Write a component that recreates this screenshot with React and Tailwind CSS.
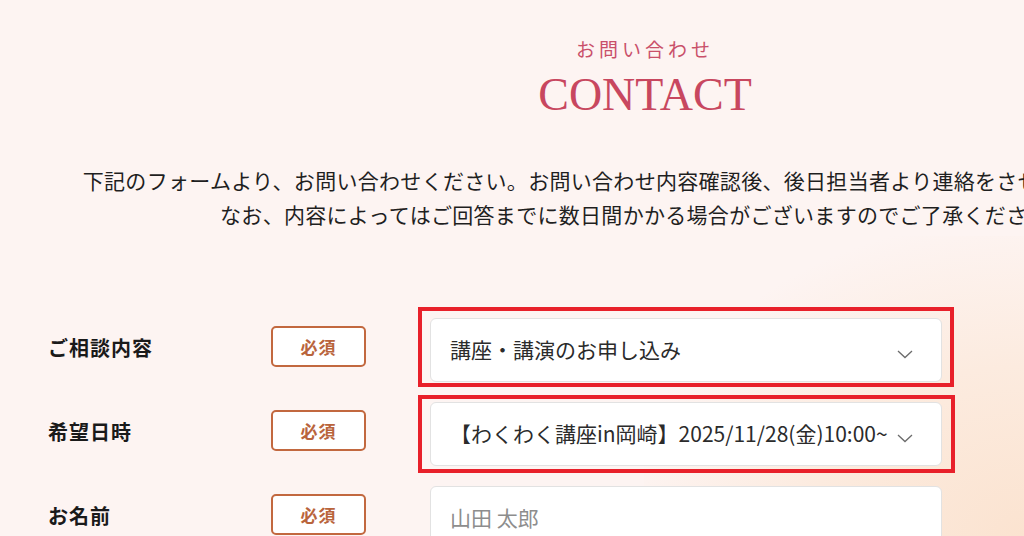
import React from "react";

function Chevron() {
  return (
    <svg width="16" height="9" viewBox="0 0 16 9" className="shrink-0">
      <polyline points="1,1 8,7.5 15,1" fill="none" stroke="#6b6b6b" strokeWidth="1.3" />
    </svg>
  );
}

function Badge() {
  return (
    <div className="mt-[8px] w-[95px] h-[41px] shrink-0 flex items-center justify-center rounded-[5px] border-2 border-[#c2683f] bg-white text-[17px] font-bold text-[#b9643c] leading-none tracking-[1px]">
      必須
    </div>
  );
}

function Row({ label, children }) {
  return (
    <div className="flex items-start h-[64px]">
      <div className="w-[223px] shrink-0 mt-[15px] leading-[30px] text-[20px] font-bold tracking-[1px] text-[#1a1a1a]">
        {label}
      </div>
      <Badge />
      <div className="ml-[64px] w-[512px] h-[64px] shrink-0 rounded-[6px] border border-[#e2e2e2] bg-white flex items-center pl-[19px] pr-[28px]">
        {children}
      </div>
    </div>
  );
}

export default function App() {
  return (
    <div
      className="relative w-[1024px] h-[536px] overflow-hidden bg-[#fdf4f2]"
      style={{ fontFamily: '"Noto Sans CJK JP", "Noto Sans", sans-serif' }}
    >
      <div className="absolute right-0 bottom-0 w-[380px] h-[300px] bg-[radial-gradient(ellipse_at_100%_100%,#fbe3d0_0%,#fcebdf_40%,rgba(253,244,242,0)_75%)]" />
      <div className="relative w-[1290px] flex flex-col items-center">
        <div className="mt-[36px] leading-[26px] text-[19px] tracking-[4px] text-[#c9506a]">
          お問い合わせ
        </div>
        <div
          className="mt-[9px] leading-[48px] text-[46px] text-[#c8475f]"
          style={{ fontFamily: '"Liberation Serif", serif' }}
        >
          CONTACT
        </div>
        <div className="mt-[44px] text-center text-[21px] leading-[34px] tracking-[0.3px] text-[#1f1f1f]">
          <div>下記のフォームより、お問い合わせください。お問い合わせ内容確認後、後日担当者より連絡をさせていただきます。</div>
          <div>なお、内容によってはご回答までに数日間かかる場合がございますのでご了承ください。</div>
        </div>
        <div className="self-start ml-[48px] mt-[87px] flex flex-col gap-[20px]">
          <Row label="ご相談内容">
            <span className="flex-1 text-[21px] text-[#2b2b2b] whitespace-nowrap">講座・講演のお申し込み</span>
            <div className="mt-[8px]"><Chevron /></div>
          </Row>
          <Row label="希望日時">
            <span className="flex-1 text-[21px] text-[#2b2b2b] whitespace-nowrap overflow-hidden">【わくわく講座in岡崎】2025/11/28(金)10:00~</span>
            <div className="mt-[8px] ml-[2px]"><Chevron /></div>
          </Row>
          <Row label="お名前">
            <span className="flex-1 text-[21px] text-[#8d8d8d] whitespace-nowrap">山田 太郎</span>
          </Row>
        </div>
      </div>
      <div className="absolute left-[418px] top-[307px] w-[536px] h-[80px] border-4 border-[#e8202a]" />
      <div className="absolute left-[418px] top-[395px] w-[537px] h-[78px] border-4 border-[#e8202a]" />
    </div>
  );
}
